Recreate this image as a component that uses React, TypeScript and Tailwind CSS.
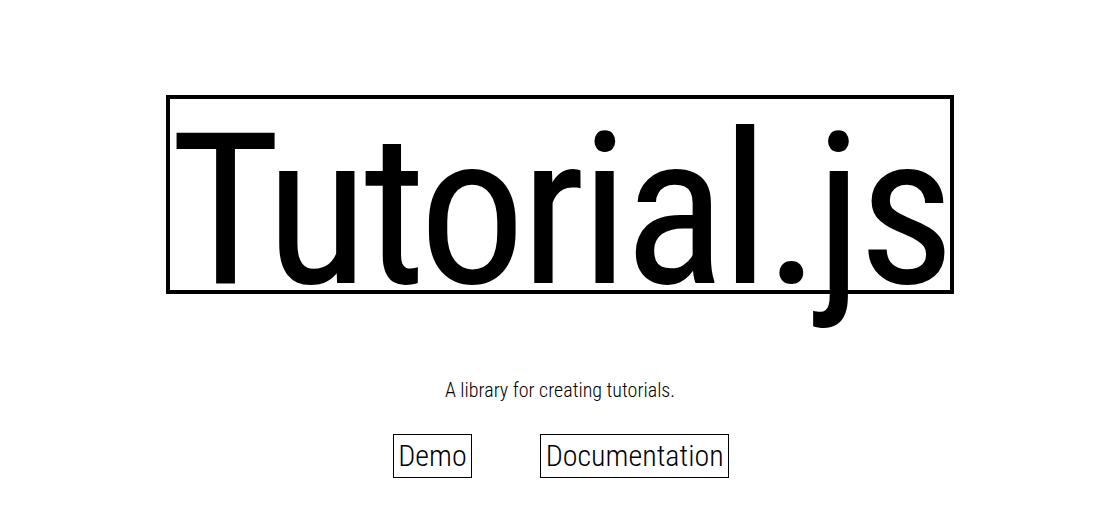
export default function App() {
  return (
    <div className="min-h-screen bg-white pl-6 text-black font-['Roboto',sans-serif] font-stretch-condensed">
      <div className="flex flex-col items-center pt-[95px]">
        <h1 className="h-[199px] border-4 border-black px-0 text-[212px] leading-[223px] font-[450] tracking-[-4.9px]">
          Tutorial.js
        </h1>
        <p className="mt-[82px] text-[20px] leading-[28px] font-light">A library for creating tutorials.</p>
        <div className="mt-[30px] flex gap-[68px] pl-[2px]">
          <a className="border border-black px-[4.5px] text-[30px] leading-[42px] font-light">Demo</a>
          <a className="border border-black px-[4.5px] text-[30px] leading-[42px] font-light">Documentation</a>
        </div>
      </div>
    </div>
  );
}
